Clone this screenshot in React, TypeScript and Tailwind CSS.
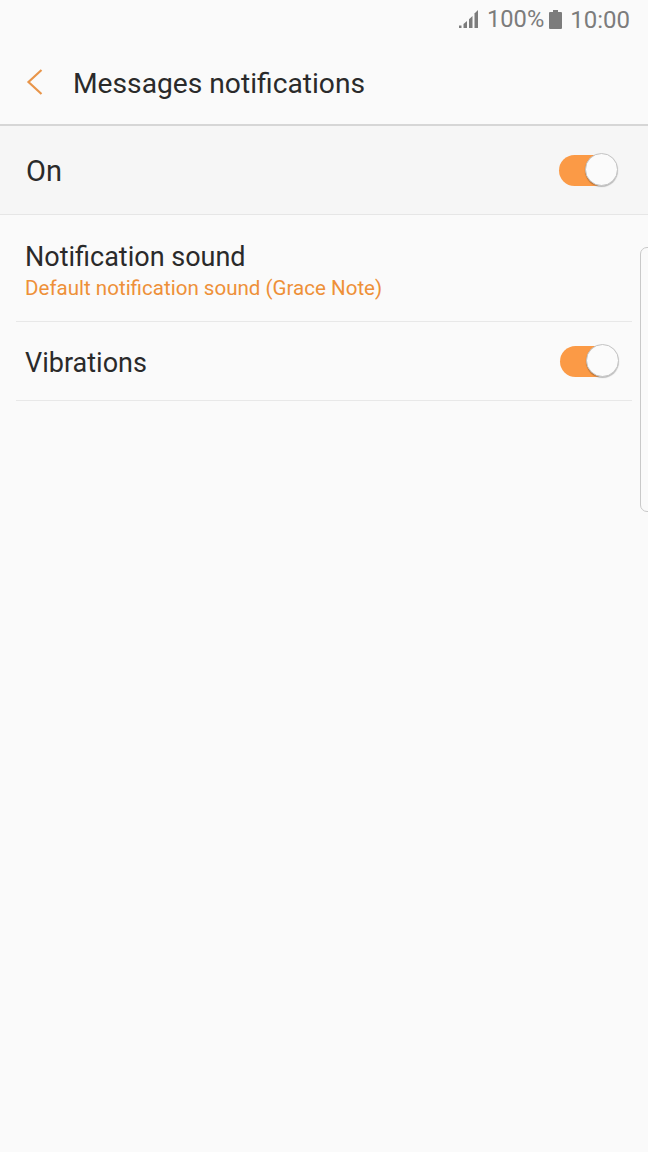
import React from 'react'

const Toggle = () => (
    <div className="relative w-[59px] h-[34px] shrink-0">
        <div className="absolute left-0 top-[2px] w-[50px] h-[31px] rounded-full bg-[#fb9a46]"></div>
        <div className="absolute right-0 top-0 w-[33px] h-[33px] rounded-full bg-[#fbfbfb] border border-[#c4c4c4] shadow-[0_1px_1px_rgba(0,0,0,0.25)]"></div>
    </div>
)

const App: React.FC = () => {
    return (
        <div className="relative w-[648px] h-[1152px] overflow-hidden bg-[#fafafa] font-['Roboto',sans-serif] text-[#2a2a2a]">
            {/* status bar */}
            <div className="h-[39px] flex items-center justify-end pr-[18px] text-[#7c7c7c] text-[24px] leading-none">
                <svg width="20" height="20" viewBox="0 0 20 20" className="mr-[8px] mb-[1px]" fill="#7c7c7c">
                    <path d="M0 19h2.500v-2.500H0z" />
                    <path d="M4.500 19H8v-7l-3.500 3z" />
                    <path d="M10 19h3.500V7L10 10.200z" />
                    <path d="M15.500 19H19V1l-3.500 3.600z" />
                </svg>
                <span className="text-[23.700px]">100%</span>
                <svg width="13" height="19" viewBox="0 0 13 19" className="ml-[5px] mr-[8px] mb-[1px]" fill="#7c7c7c">
                    <path d="M4 0h5v2h3a1 1 0 0 1 1 1v15a1 1 0 0 1-1 1H1a1 1 0 0 1-1-1V3a1 1 0 0 1 1-1h3z" />
                </svg>
                <span>10:00</span>
            </div>

            {/* header */}
            <div className="h-[87px] flex items-center pl-[26px] pt-[1px] border-b-2 border-[#d6d6d6]">
                <svg width="18" height="28" viewBox="0 0 18 28" fill="none" stroke="#e8954a" strokeWidth="2.200" className="mr-[29px]">
                    <path d="M15.500 2 L2.500 14 L15.500 26" />
                </svg>
                <span className="text-[28.200px] mt-[4px]">Messages notifications</span>
            </div>

            {/* master switch */}
            <div className="h-[89px] flex items-center justify-between pl-[26px] pr-[30px] bg-[#f6f6f6] border-b border-[#e6e6e6]">
                <span className="text-[29px] mt-[3px]">On</span>
                <Toggle />
            </div>

            {/* rows */}
            <div className="px-[16px]">
                <div className="h-[107px] flex flex-col pt-[26px] pl-[9px] border-b border-[#e8e8e8]">
                    <span className="text-[27px] leading-[32px]">Notification sound</span>
                    <span className="text-[20.550px] leading-[28px] mt-[1px] text-[#ee9038]">Default notification sound (Grace Note)</span>
                </div>
                <div className="h-[79px] flex items-center justify-between pl-[9px] pr-[13px] border-b border-[#e8e8e8]">
                    <span className="text-[27px] mt-[4px]">Vibrations</span>
                    <Toggle />
                </div>
            </div>

            {/* edge panel handle */}
            <div className="absolute left-[640px] top-[247px] w-[20px] h-[265px] rounded-l-[7px] border border-[#c9c9c9]"></div>
        </div>
    )
}

export default App
